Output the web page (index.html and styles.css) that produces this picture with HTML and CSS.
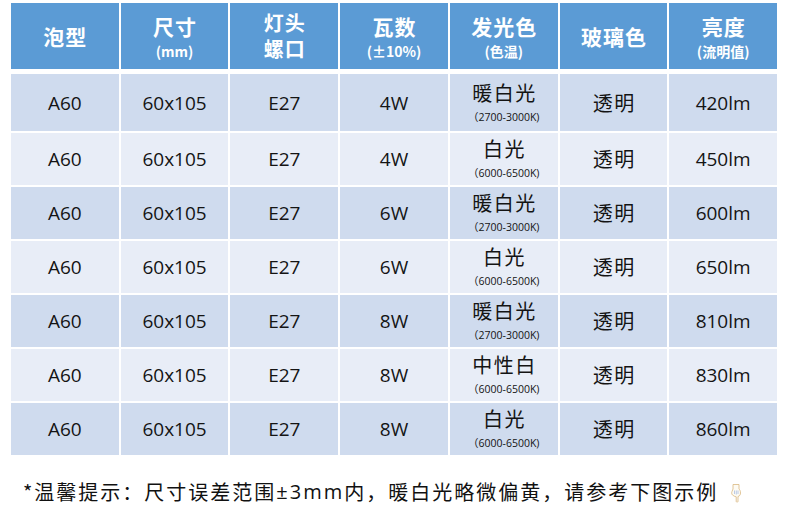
FILE: index.html
```html
<!DOCTYPE html>
<html lang="zh-CN">
<head>
<meta charset="utf-8">
<title>泡型参数表</title>
<link rel="stylesheet" href="styles.css">
</head>
<body>
<div class="page">
  <div class="table">
    <div class="row head">
      <div class="cell"><span class="h">泡型</span></div>
      <div class="cell"><span class="h">尺寸</span><span class="hs">(mm)</span></div>
      <div class="cell"><span class="h two">灯头</span><span class="h two">螺口</span></div>
      <div class="cell"><span class="h">瓦数</span><span class="hs">(±10%)</span></div>
      <div class="cell"><span class="h">发光色</span><span class="hs">(色温)</span></div>
      <div class="cell"><span class="h">玻璃色</span></div>
      <div class="cell"><span class="h">亮度</span><span class="hs">(流明值)</span></div>
    </div>
    <div class="row dark first">
      <div class="cell">A60</div><div class="cell">60x105</div><div class="cell">E27</div><div class="cell">4W</div>
      <div class="cell"><span class="cn">暖白光</span><span class="sub">（2700-3000K)</span></div>
      <div class="cell"><span class="cn">透明</span></div><div class="cell">420lm</div>
    </div>
    <div class="row light">
      <div class="cell">A60</div><div class="cell">60x105</div><div class="cell">E27</div><div class="cell">4W</div>
      <div class="cell"><span class="cn">白光</span><span class="sub">（6000-6500K)</span></div>
      <div class="cell"><span class="cn">透明</span></div><div class="cell">450lm</div>
    </div>
    <div class="row dark">
      <div class="cell">A60</div><div class="cell">60x105</div><div class="cell">E27</div><div class="cell">6W</div>
      <div class="cell"><span class="cn">暖白光</span><span class="sub">（2700-3000K)</span></div>
      <div class="cell"><span class="cn">透明</span></div><div class="cell">600lm</div>
    </div>
    <div class="row light">
      <div class="cell">A60</div><div class="cell">60x105</div><div class="cell">E27</div><div class="cell">6W</div>
      <div class="cell"><span class="cn">白光</span><span class="sub">（6000-6500K)</span></div>
      <div class="cell"><span class="cn">透明</span></div><div class="cell">650lm</div>
    </div>
    <div class="row dark">
      <div class="cell">A60</div><div class="cell">60x105</div><div class="cell">E27</div><div class="cell">8W</div>
      <div class="cell"><span class="cn">暖白光</span><span class="sub">（2700-3000K)</span></div>
      <div class="cell"><span class="cn">透明</span></div><div class="cell">810lm</div>
    </div>
    <div class="row light">
      <div class="cell">A60</div><div class="cell">60x105</div><div class="cell">E27</div><div class="cell">8W</div>
      <div class="cell"><span class="cn">中性白</span><span class="sub">（6000-6500K)</span></div>
      <div class="cell"><span class="cn">透明</span></div><div class="cell">830lm</div>
    </div>
    <div class="row dark">
      <div class="cell">A60</div><div class="cell">60x105</div><div class="cell">E27</div><div class="cell">8W</div>
      <div class="cell"><span class="cn">白光</span><span class="sub">（6000-6500K)</span></div>
      <div class="cell"><span class="cn">透明</span></div><div class="cell">860lm</div>
    </div>
  </div>
  <p class="note">*温馨提示：尺寸误差范围<span class="lat">±3mm</span>内，暖白光略微偏黄，请参考下图示例<svg class="hand" width="12" height="20" viewBox="0 0 12 20" aria-hidden="true"><path d="M3 1.5 H9 V6 C10 7 10.5 8 10.5 10 C10.5 12 9.5 13 8 13.5 V18.5 C8 19.3 6.2 19.3 6.2 18.5 V13.8 C5 13.6 3.5 13 2.5 12 C1.5 11 1.5 9.5 2 8.5 L3 6 Z" fill="#fdfbf4" stroke="#d9b880" stroke-width="0.8"/><path d="M4.5 7.5 V11 M6.3 7.5 V11.5 M8 7.5 V11" stroke="#9fb6e0" stroke-width="0.7" fill="none"/></svg></p>
</div>
</body>
</html>
```

FILE: styles.css
```css
html, body {
  margin: 0;
  padding: 0;
  background: #ffffff;
}

.page {
  padding: 3px 0 0 11px;
  font-family: "Open Sans", "Noto Sans CJK SC", sans-serif;
  color: #141414;
}

.table {
  width: 766px;
  display: flex;
  flex-direction: column;
  gap: 2px;
}

.row {
  display: grid;
  grid-template-columns: repeat(7, 1fr);
  gap: 2px;
  height: 52px;
}

.row.head {
  height: 66px;
  margin-bottom: 3px;
}

.row.first {
  height: 57px;
}

.cell {
  display: flex;
  flex-direction: column;
  align-items: center;
  justify-content: center;
  font-size: 19px;
  line-height: 22px;
}

.head .cell {
  background: #5b9bd5;
  color: #ffffff;
}

.dark .cell {
  background: #cfdbee;
}

.light .cell {
  background: #e8edf7;
}

.h {
  font-family: "Noto Sans CJK SC", sans-serif;
  font-weight: 700;
  font-size: 21px;
  line-height: 25px;
  letter-spacing: 1px;
  padding-left: 1px;
  text-align: center;
}

.h.two {
  font-size: 20px;
  line-height: 26px;
}

.hs {
  font-family: "Noto Sans CJK SC", sans-serif;
  font-weight: 700;
  font-size: 14px;
  line-height: 16px;
  margin-top: 4px;
}

.cn {
  font-family: "Noto Sans CJK SC", sans-serif;
  font-size: 20px;
  line-height: 20px;
  letter-spacing: 1.5px;
  padding-left: 1.5px;
}

.sub {
  font-family: "Open Sans", "Noto Sans CJK SC", sans-serif;
  font-size: 10.5px;
  line-height: 12px;
  margin-top: 8px;
}

.note {
  margin: 25px 0 0 12px;
  font-family: "Noto Sans CJK SC", sans-serif;
  font-size: 20px;
  line-height: 24px;
  letter-spacing: 2px;
  color: #111111;
  display: flex;
  align-items: center;
}

.lat {
  font-family: "Open Sans", sans-serif;
  letter-spacing: 2px;
}

.hand {
  margin-left: 12px;
  margin-top: 2px;
}
```
